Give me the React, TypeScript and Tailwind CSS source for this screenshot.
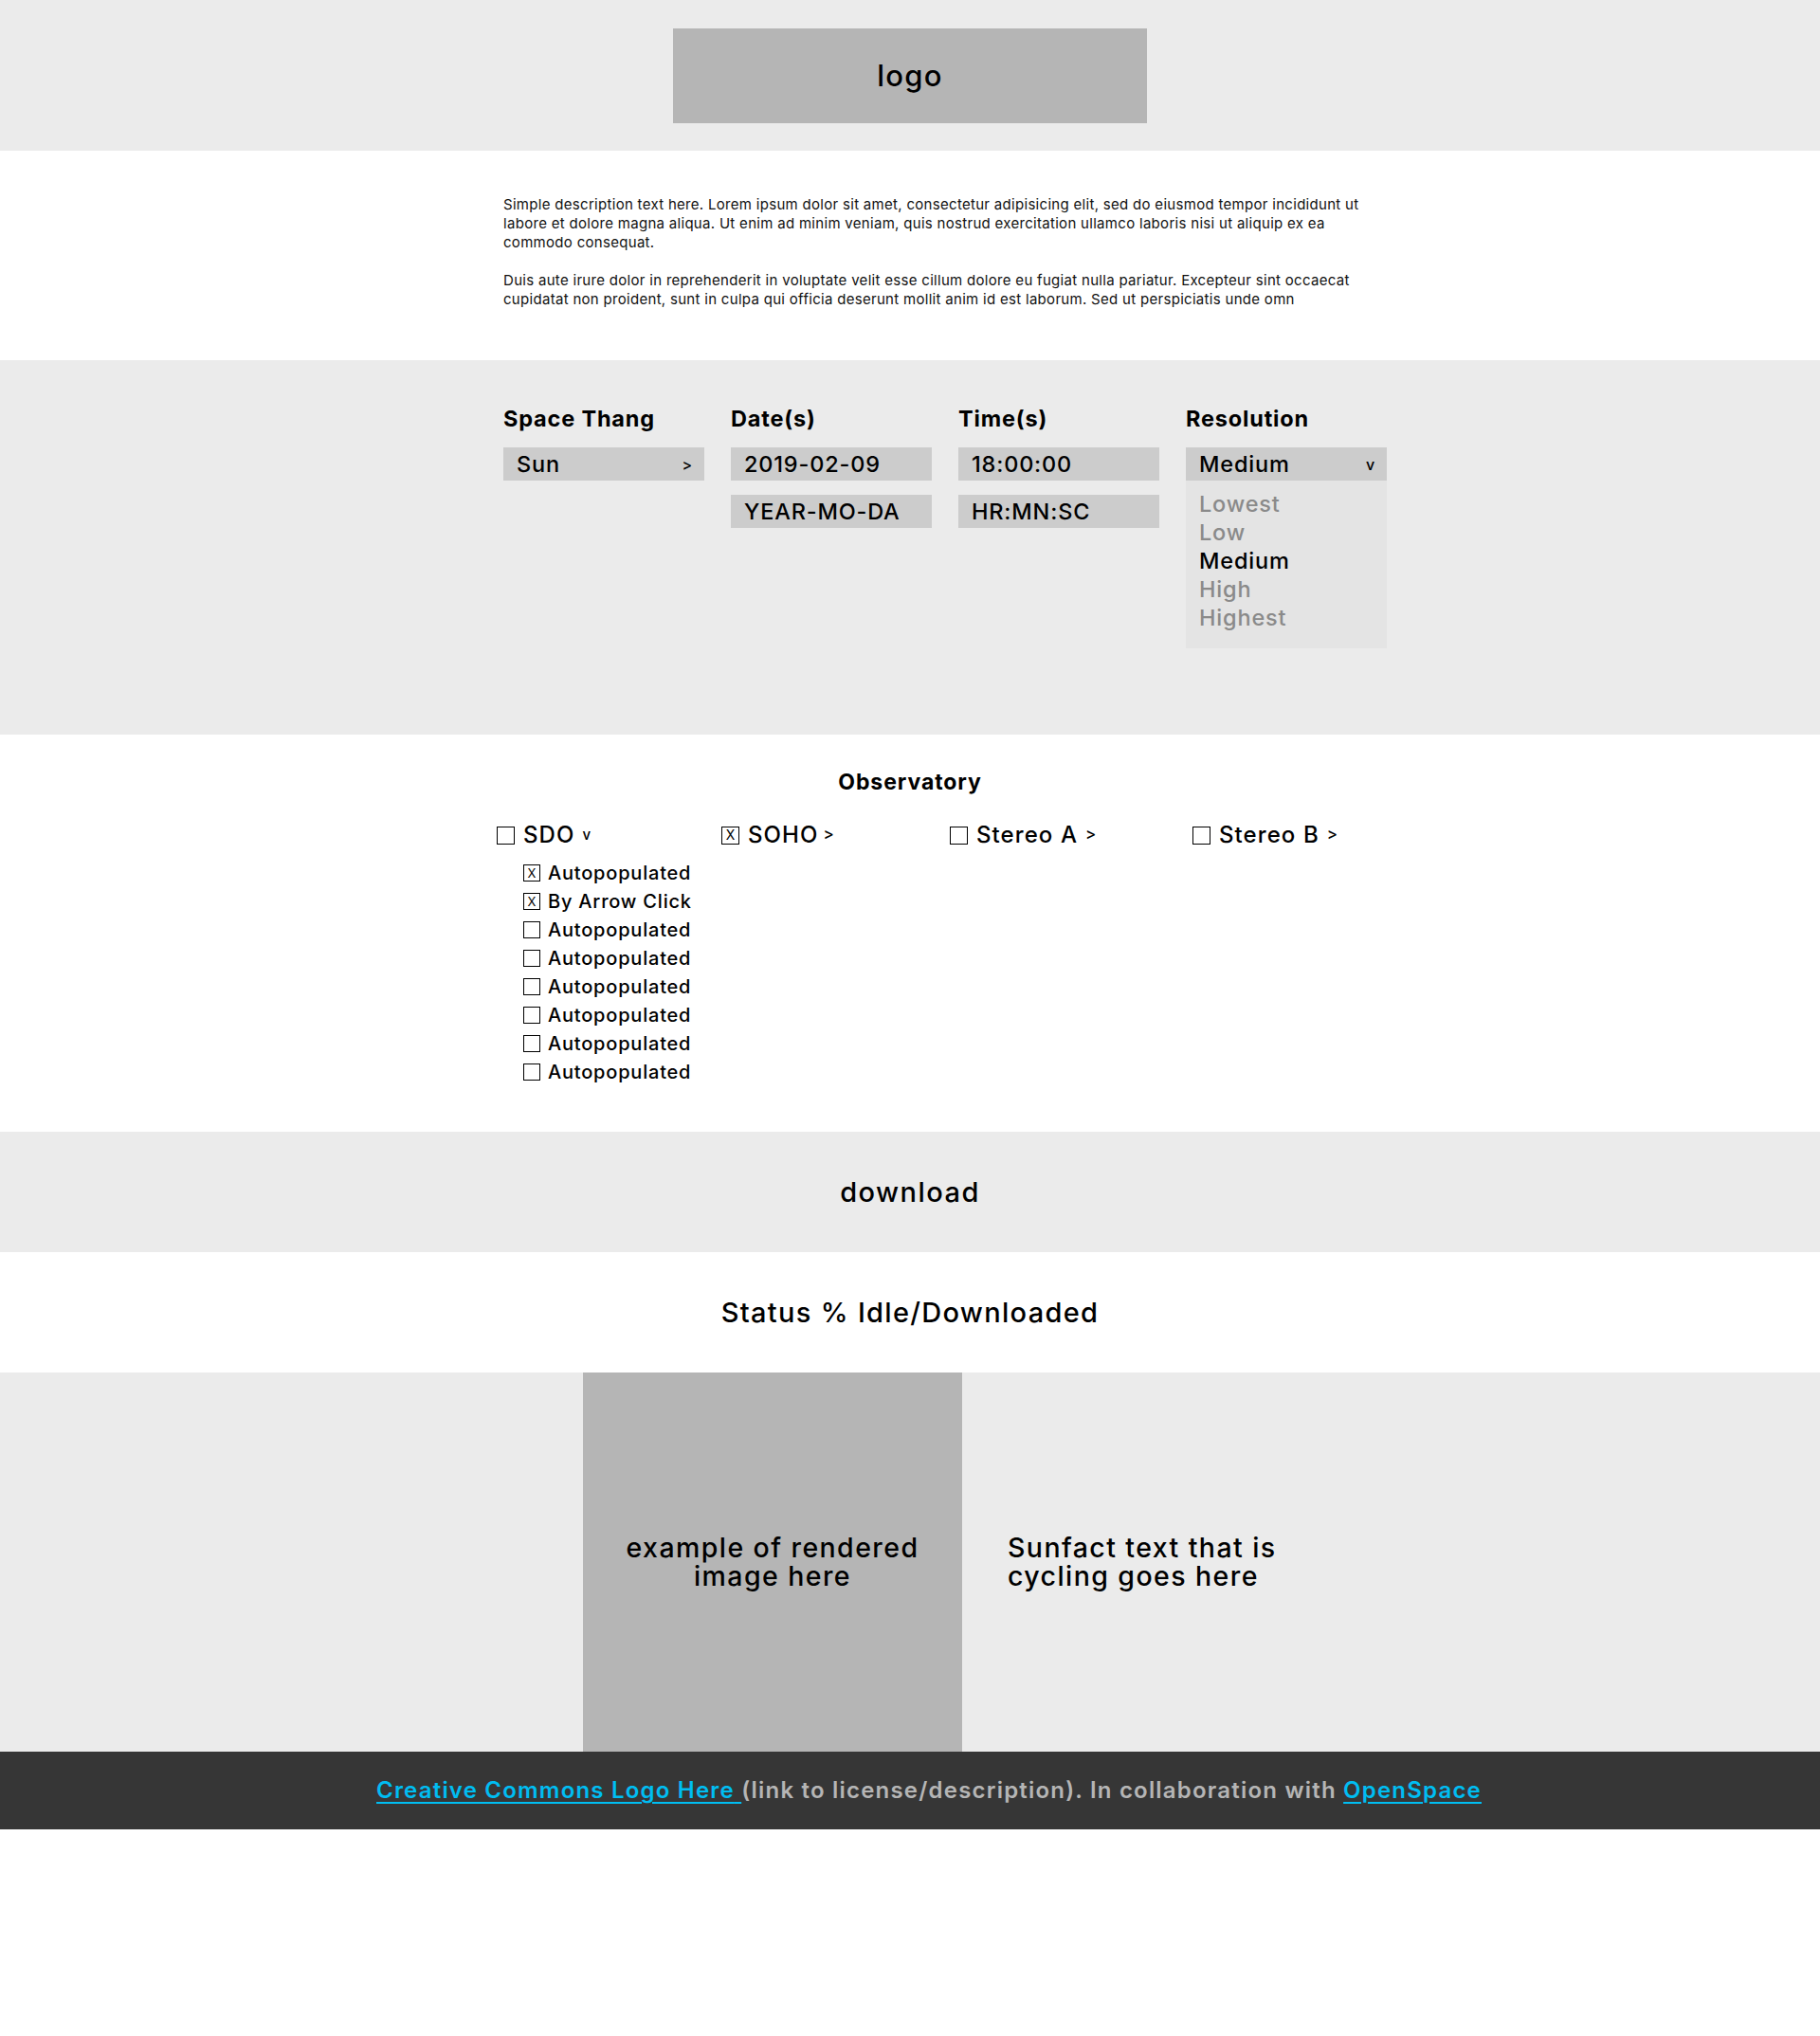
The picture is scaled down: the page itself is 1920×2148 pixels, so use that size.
import React from "react";

const font = { fontFamily: "Inter, 'Open Sans', 'Liberation Sans', sans-serif" };

function Box({ children, arrow }: { children: React.ReactNode; arrow?: string }) {
  return (
    <div className="flex h-[35px] w-[212px] items-center justify-between bg-[#cccccc] pl-[14px] pr-[12px] text-[23.5px] font-medium tracking-[0.035em] text-black">
      <span>{children}</span>
      {arrow ? <span className="text-[16px] font-medium">{arrow}</span> : null}
    </div>
  );
}

function Check({ checked, small }: { checked?: boolean; small?: boolean }) {
  return (
    <span
      className={
        small
          ? "flex h-[18px] w-[18px] shrink-0 items-center justify-center border-[1.5px] border-black text-[13px] leading-none"
          : "flex h-[19px] w-[19px] shrink-0 items-center justify-center border-[1.5px] border-black text-[14px] leading-none"
      }
    >
      {checked ? "X" : ""}
    </span>
  );
}

export default function App() {
  const subs = [
    { t: "Autopopulated", c: true },
    { t: "By Arrow Click", c: true },
    { t: "Autopopulated", c: false },
    { t: "Autopopulated", c: false },
    { t: "Autopopulated", c: false },
    { t: "Autopopulated", c: false },
    { t: "Autopopulated", c: false },
    { t: "Autopopulated", c: false },
  ];
  return (
    <div style={font} className="min-h-[2148px] w-[1920px] bg-white text-black">
      {/* header */}
      <header className="h-[159px] bg-[#ebebeb] pt-[30px]">
        <div className="mx-auto flex h-[100px] w-[500px] items-center justify-center bg-[#b5b5b5] text-[31px] font-medium tracking-[0.04em]">
          logo
        </div>
      </header>

      {/* description */}
      <section className="h-[221px] pt-[47px]">
        <div className="ml-[531px] w-[915px] text-[15px] leading-[20px] tracking-[0.02em] text-[#111]">
          <p>
            Simple description text here. Lorem ipsum dolor sit amet, consectetur adipisicing elit, sed do eiusmod tempor incididunt ut labore et dolore magna aliqua. Ut enim ad minim veniam, quis nostrud exercitation ullamco laboris nisi ut aliquip ex ea commodo consequat.
          </p>
          <p className="mt-[20px]">
            Duis aute irure dolor in reprehenderit in voluptate velit esse cillum dolore eu fugiat nulla pariatur. Excepteur sint occaecat cupidatat non proident, sunt in culpa qui officia deserunt mollit anim id est laborum. Sed ut perspiciatis unde omn
          </p>
        </div>
      </section>

      {/* form */}
      <section className="h-[395px] bg-[#ebebeb]">
        <div className="ml-[531px] flex gap-[28px] pt-[48px]">
          <div className="flex flex-col">
            <h3 className="h-[28px] text-[23.5px] font-bold leading-[28px] tracking-[0.035em]">Space Thang</h3>
            <div className="mt-[16px]">
              <Box arrow=">">Sun</Box>
            </div>
          </div>
          <div className="flex flex-col">
            <h3 className="h-[28px] text-[23.5px] font-bold leading-[28px] tracking-[0.035em]">Date(s)</h3>
            <div className="mt-[16px] flex flex-col gap-[15px]">
              <Box>2019-02-09</Box>
              <Box>YEAR-MO-DA</Box>
            </div>
          </div>
          <div className="flex flex-col">
            <h3 className="h-[28px] text-[23.5px] font-bold leading-[28px] tracking-[0.035em]">Time(s)</h3>
            <div className="mt-[16px] flex flex-col gap-[15px]">
              <Box>18:00:00</Box>
              <Box>HR:MN:SC</Box>
            </div>
          </div>
          <div className="flex flex-col">
            <h3 className="h-[28px] text-[23.5px] font-bold leading-[28px] tracking-[0.035em]">Resolution</h3>
            <div className="mt-[16px]">
              <Box arrow="v">Medium</Box>
              <ul className="w-[212px] bg-[#e4e4e4] pb-[17px] pl-[14px] pt-[10px] text-[23.5px] font-medium leading-[30px] tracking-[0.035em]">
                <li className="text-[#8a8a8a]">Lowest</li>
                <li className="text-[#8a8a8a]">Low</li>
                <li className="text-black">Medium</li>
                <li className="text-[#8a8a8a]">High</li>
                <li className="text-[#8a8a8a]">Highest</li>
              </ul>
            </div>
          </div>
        </div>
      </section>

      {/* observatory */}
      <section className="h-[419px] pt-[36px]">
        <h3 className="text-center text-[23px] font-bold leading-[28px] tracking-[0.04em]">Observatory</h3>
        <div className="ml-[524px] mt-[27px] grid grid-cols-[237px_241px_256px_200px]">
          <div>
            <div className="flex h-[30px] items-center">
              <Check />
              <span className="ml-[9px] text-[24px] font-medium tracking-[0.045em]">SDO</span>
              <span className="ml-[8px] text-[15px] font-medium">v</span>
            </div>
            <div className="ml-[28px] mt-[10px] flex flex-col">
              {subs.map((s, i) => (
                <div key={i} className="flex h-[30px] items-center">
                  <Check checked={s.c} small />
                  <span className="ml-[8px] text-[20px] font-medium tracking-[0.04em]">{s.t}</span>
                </div>
              ))}
            </div>
          </div>
          <div className="flex h-[30px] items-center">
            <Check checked />
            <span className="ml-[9px] text-[24px] font-medium tracking-[0.045em]">SOHO</span>
            <span className="ml-[5px] text-[17px] font-medium">&gt;</span>
          </div>
          <div className="flex h-[30px] items-center">
            <Check />
            <span className="ml-[9px] text-[24px] font-medium tracking-[0.045em]">Stereo A</span>
            <span className="ml-[8px] text-[17px] font-medium">&gt;</span>
          </div>
          <div className="flex h-[30px] items-center">
            <Check />
            <span className="ml-[9px] text-[24px] font-medium tracking-[0.045em]">Stereo B</span>
            <span className="ml-[8px] text-[17px] font-medium">&gt;</span>
          </div>
        </div>
      </section>

      {/* download */}
      <section className="flex h-[127px] items-center justify-center bg-[#ebebeb] text-[29px] font-medium tracking-[0.05em]">
        download
      </section>

      {/* status */}
      <section className="flex h-[127px] items-center justify-center text-[29px] font-medium tracking-[0.045em]">
        Status % Idle/Downloaded
      </section>

      {/* preview */}
      <section className="flex h-[400px] items-center bg-[#ebebeb]">
        <div className="ml-[615px] flex h-[400px] w-[400px] flex-col items-center justify-center bg-[#b5b5b5] text-center text-[28.5px] font-medium leading-[30px] tracking-[0.05em]">
          <span>example of rendered</span>
          <span>image here</span>
        </div>
        <div className="ml-[48px] flex flex-col text-[28.5px] font-medium leading-[30px] tracking-[0.05em]">
          <span>Sunfact text that is</span>
          <span>cycling goes here</span>
        </div>
      </section>

      {/* footer */}
      <footer className="flex h-[82px] items-center justify-center bg-[#363636] pl-[40px] text-[24px] font-semibold tracking-[0.05em] text-[#b5b5b5]">
        <p>
          <a href="#" className="text-[#00bdf2] underline decoration-[2px] underline-offset-[4px]">
            Creative Commons Logo Here{" "}
          </a>
          (link to license/description). In collaboration with{" "}
          <a href="#" className="text-[#00bdf2] underline decoration-[2px] underline-offset-[4px]">
            OpenSpace
          </a>
        </p>
      </footer>
    </div>
  );
}
